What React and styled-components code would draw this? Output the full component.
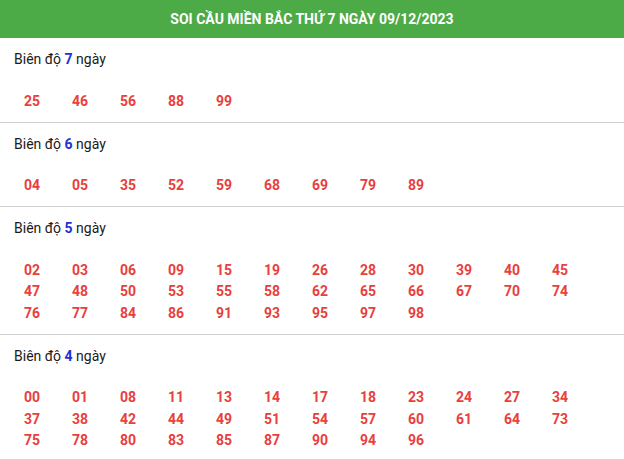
import React from 'react';
import styled, { createGlobalStyle } from 'styled-components';

const Global = createGlobalStyle`
  body {
    margin: 0;
    background: #fff;
    font-family: Roboto, "Liberation Sans", Arial, sans-serif;
  }
`

const Self = styled.div`
  width: 624px;
`
const Header = styled.div`
  height: 38px;
  background: #4caa47;
  color: #fff;
  font-size: 14px;
  font-weight: bold;
  display: flex;
  align-items: center;
  justify-content: center;
`
const Section = styled.div`
  padding: 11px 14px 10px;
  border-bottom: 1px solid #cfcfcf;
`
const Label = styled.div`
  font-size: 14px;
  line-height: 21px;
  color: #1a1a1a;
`
const Days = styled.b`
  color: #1f2fd6;
`
const Numbers = styled.div`
  display: grid;
  grid-template-columns: repeat(12, 48px);
  grid-auto-rows: 21.5px;
  align-items: center;
  margin-top: 20px;
  padding-left: 10px;
`
const Num = styled.span`
  font-size: 14px;
  font-weight: bold;
  color: #e8403d;
`

const groups = [
  { days: 7, nums: '25 46 56 88 99' },
  { days: 6, nums: '04 05 35 52 59 68 69 79 89' },
  { days: 5, nums: '02 03 06 09 15 19 26 28 30 39 40 45 47 48 50 53 55 58 62 65 66 67 70 74 76 77 84 86 91 93 95 97 98' },
  { days: 4, nums: '00 01 08 11 13 14 17 18 23 24 27 34 37 38 42 44 49 51 54 57 60 61 64 73 75 78 80 83 85 87 90 94 96' },
]

export default function App() {
  return (
    <Self>
      <Global />
      <Header>SOI CẦU MIỀN BẮC THỨ 7 NGÀY 09/12/2023</Header>
      {groups.map(g => (
        <Section key={g.days}>
          <Label>Biên độ <Days>{g.days}</Days> ngày</Label>
          <Numbers>
            {g.nums.split(' ').map(n => <Num key={n}>{n}</Num>)}
          </Numbers>
        </Section>
      ))}
    </Self>
  );
}
